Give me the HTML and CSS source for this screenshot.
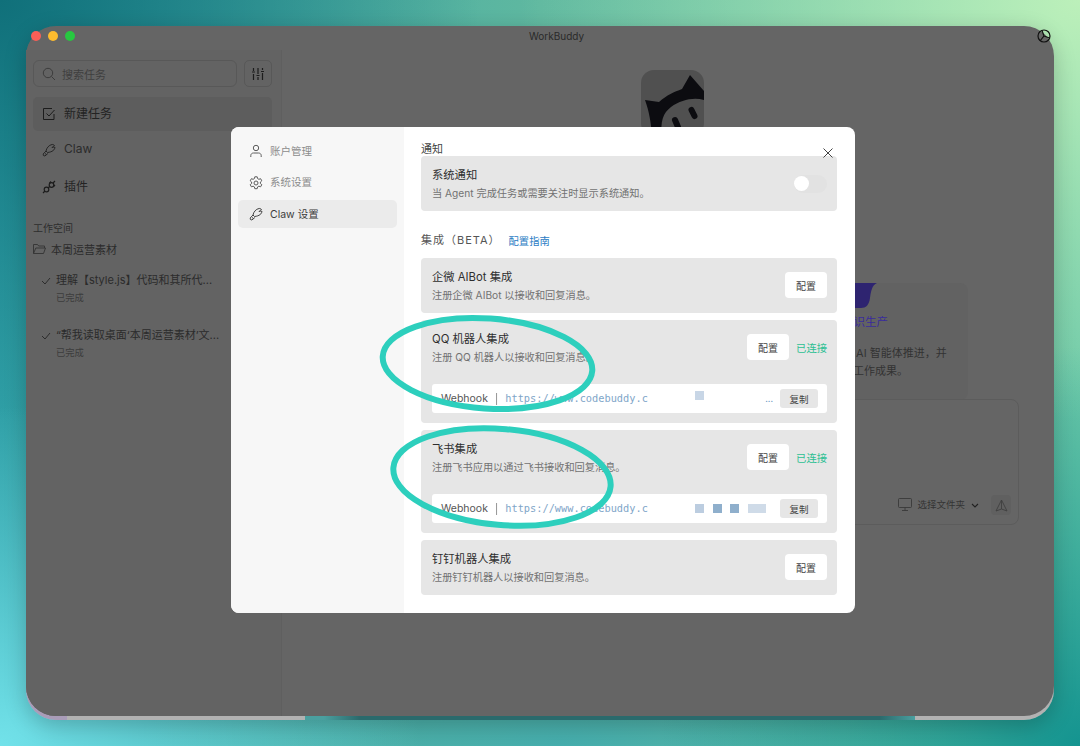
FILE: index.html
```html
<!DOCTYPE html>
<html lang="zh-CN">
<head>
<meta charset="utf-8"/>
<title>WorkBuddy</title>
<link rel="stylesheet" href="styles.css">
</head>
<body>

<div class="window">
  <div class="shell">
    <div class="titlebar">
      <div class="lights"><i class="red"></i><i class="yellow"></i><i class="green"></i></div>
      <div class="app-title">WorkBuddy</div>
      <svg class="account-icon" width="14" height="14" viewBox="0 0 14 14" fill="none" stroke="#111" stroke-width="1.2"><circle cx="7" cy="7" r="6"/><path d="M3 12 7 7l5.5 2M7 7 5 1.5"/></svg>
    </div>

    <div class="app-body">
      <aside class="sidebar">
        <div class="search-row">
          <div class="search">
            <svg width="14" height="14" viewBox="0 0 14 14" fill="none" stroke="#3c3c3c" stroke-width="1"><circle cx="6" cy="6" r="4.7"/><path d="m9.5 9.5 3.5 3.5"/></svg>
            <span>搜索任务</span>
          </div>
          <div class="filter-btn">
            <svg width="14" height="14" viewBox="0 0 14 14" fill="none" stroke="#1c1c1c" stroke-width="1.2"><path d="M2.5 1v3M2.5 7v6M7 1v6M7 10v3M11.500 1v2M11.500 6v7M1 5h3M5.500 8.500h3M10 4.500h3"/></svg>
          </div>
        </div>
        <div class="nav-item active">
          <svg width="14" height="14" viewBox="0 0 14 14" fill="none" stroke="#1c1c1c" stroke-width="1"><path d="M12 7v5.500H1.500v-11H10"/><path d="m4.500 6.500 2.500 2.500 5.500-6"/></svg>
          <span>新建任务</span>
        </div>
        <div class="nav-item claw">
          <svg width="14" height="14" viewBox="0 0 14 14" fill="none" stroke="#262626" stroke-width="1"><path d="M5.500 9.500 4 8c.5-3 3-6 6-6.500 1-.2 2 .3 2.500 1-1 .5-2 1.300-2.500 2 1-.3 2-.4 3-.2-.3 2.500-2.500 4.700-7.500 5.200z"/><path d="m4 8-2.800 3 .2 1.500 1.500.5 3-2.500M3 10.500l1.500 1"/></svg>
          <span>Claw</span>
        </div>
        <div class="nav-item plugin">
          <svg width="14" height="14" viewBox="0 0 14 14" fill="none" stroke="#1c1c1c" stroke-width="1.2"><circle cx="4.500" cy="9.500" r="2.300"/><circle cx="9.500" cy="5" r="2.300"/><path d="M1 13l2-2M11 3l2-2M9 1.500 7.500 3.200M13 5l-1.500 1.500M6 8l1.500-1.300"/></svg>
          <span>插件</span>
        </div>
        <div class="section-label">工作空间</div>
        <div class="folder">
          <svg width="13" height="12" viewBox="0 0 13 12" fill="none" stroke="#333" stroke-width=".9"><path d="M.5 10.500v-9h4l1.200 1.500h5.800v2M.5 10.500h10l2-5.500H2.800z"/></svg>
          <span>本周运营素材</span>
        </div>
        <div class="task">
          <svg width="10" height="8" viewBox="0 0 10 8" fill="none" stroke="#2c2c2c" stroke-width="1"><path d="m1 4 3 3 5-6"/></svg>
          <div><div class="task-title">理解【style.js】代码和其所代...</div><div class="task-status">已完成</div></div>
        </div>
        <div class="task">
          <svg width="10" height="8" viewBox="0 0 10 8" fill="none" stroke="#2c2c2c" stroke-width="1"><path d="m1 4 3 3 5-6"/></svg>
          <div><div class="task-title">“帮我读取桌面‘本周运营素材’文...</div><div class="task-status">已完成</div></div>
        </div>
      </aside>

      <main class="main">
        <svg class="logo" width="63" height="66" viewBox="0 0 63 66">
          <rect width="63" height="66" rx="13" fill="#505050"/>
          <path d="M4 30 18 32C26 25 33 22 41 19L49 5 63 21V30C52 27 40 30 30 37 22 43 19 52 21 66H11C10 52 8 41 4 30Z" fill="#0c0c10"/>
          <g stroke="#0c0c10" stroke-width="6" stroke-linecap="round"><path d="m34 50 3 7M50.500 40l3 6"/></g>
        </svg>
        <section class="feature">
          <svg class="feature-mark" width="42" height="25" viewBox="0 0 42 25"><path d="M0 0H42C37 2 36 8 35 15 34 22 31 25 26 25H0Z" fill="#2e2470"/></svg>
          <div class="feature-title">知识生产</div>
          <p class="feature-text">由 AI 智能体推进，并<br>的工作成果。</p>
        </section>
        <section class="composer">
          <svg width="14" height="13" viewBox="0 0 14 13" fill="none" stroke="#3a3a3a" stroke-width=".9"><rect x=".5" y=".5" width="13" height="9" rx="1"/><path d="M4 12.500h6M7 9.500v3"/></svg>
          <span class="folder-pick">选择文件夹</span>
          <svg width="8" height="5" viewBox="0 0 8 5" fill="none" stroke="#222" stroke-width="1.100"><path d="m1 1 3 3 3-3"/></svg>
          <div class="send-btn">
            <svg width="13" height="13" viewBox="0 0 13 13" fill="none" stroke="#3f3f3f" stroke-width=".9"><path d="M6.500 1 12 12 6.500 10 1 12zM6.500 1v9"/></svg>
          </div>
        </section>
      </main>
    </div>
  </div>
  <div class="edge-strips">
    <i class="seg-a"></i><i class="seg-b"></i><i class="seg-c"></i><i class="seg-d"></i><i class="seg-e"></i><i class="seg-c seg-f"></i>
  </div>
</div>

<div class="modal">
  <nav class="modal-nav">
    <div class="modal-link">
      <svg width="14" height="14" viewBox="0 0 14 14" fill="none" stroke="#5c5c5c" stroke-width="1"><circle cx="7" cy="4" r="2.700"/><path d="M1.800 13v-1.500c0-1.500 1.200-2.500 2.700-2.500h5c1.500 0 2.700 1 2.700 2.500V13"/></svg>
      <span>账户管理</span>
    </div>
    <div class="modal-link">
      <svg width="14" height="14" viewBox="0 0 14 14" fill="none" stroke="#5c5c5c" stroke-width="1"><circle cx="7" cy="7" r="2"/><path d="M5.800.8h2.400l.4 1.800 1.300.7 1.700-.6 1.200 2.100-1.400 1.200v1.500l1.400 1.200-1.200 2.100-1.700-.6-1.300.7-.4 1.800H5.800l-.4-1.800-1.300-.7-1.700.6L1.200 8.700l1.400-1.200V6L1.200 4.800l1.200-2.100 1.700.6 1.300-.7z"/></svg>
      <span>系统设置</span>
    </div>
    <div class="modal-link current">
      <svg width="14" height="14" viewBox="0 0 14 14" fill="none" stroke="#444" stroke-width="1"><path d="M5.500 9.500 4 8c.5-3 3-6 6-6.500 1-.2 2 .3 2.500 1-1 .5-2 1.300-2.500 2 1-.3 2-.4 3-.2-.3 2.500-2.500 4.700-7.500 5.200z"/><path d="m4 8-2.800 3 .2 1.500 1.500.5 3-2.500M3 10.500l1.500 1"/></svg>
      <span>Claw 设置</span>
    </div>
  </nav>

  <div class="modal-content">
    <svg class="close" width="10" height="10" viewBox="0 0 10 10" fill="none" stroke="#444" stroke-width="1"><path d="m.5.500 9 9M9.500.500l-9 9"/></svg>
    <h3 class="group-title first">通知</h3>
    <div class="card notify">
      <div class="card-head">
        <div>
          <div class="card-title">系统通知</div>
          <div class="card-desc">当 Agent 完成任务或需要关注时显示系统通知。</div>
        </div>
        <div class="toggle"><i></i></div>
      </div>
    </div>

    <div class="group-row">
      <h3 class="group-title">集成（BETA）</h3>
      <a class="guide">配置指南</a>
    </div>

    <div class="card">
      <div class="card-head">
        <div>
          <div class="card-title">企微 AIBot 集成</div>
          <div class="card-desc">注册企微 AIBot 以接收和回复消息。</div>
        </div>
        <button class="config">配置</button>
      </div>
    </div>

    <div class="card">
      <div class="card-head">
        <div>
          <div class="card-title">QQ 机器人集成</div>
          <div class="card-desc">注册 QQ 机器人以接收和回复消息。</div>
        </div>
        <button class="config">配置</button>
        <span class="connected">已连接</span>
      </div>
      <div class="webhook">
        <span class="webhook-label">Webhook</span><span class="sep">|</span>
        <span class="url">https://www.codebuddy.c</span>
        <div class="masks raised"><i class="m-pale"></i></div>
        <span class="dots">...</span>
        <button class="copy">复制</button>
      </div>
    </div>

    <div class="card">
      <div class="card-head">
        <div>
          <div class="card-title">飞书集成</div>
          <div class="card-desc">注册飞书应用以通过飞书接收和回复消息。</div>
        </div>
        <button class="config">配置</button>
        <span class="connected">已连接</span>
      </div>
      <div class="webhook">
        <span class="webhook-label">Webhook</span><span class="sep">|</span>
        <span class="url">https://www.codebuddy.c</span>
        <div class="masks"><i class="m-mid"></i><i class="m-dark"></i><i class="m-dark"></i><i class="m-wide"></i></div>
        <button class="copy">复制</button>
      </div>
    </div>

    <div class="card">
      <div class="card-head">
        <div>
          <div class="card-title">钉钉机器人集成</div>
          <div class="card-desc">注册钉钉机器人以接收和回复消息。</div>
        </div>
        <button class="config">配置</button>
      </div>
    </div>
  </div>
</div>

<svg class="marks" width="1080" height="746" viewBox="0 0 1080 746" fill="none" stroke="#2dcfbd" stroke-width="6">
  <ellipse cx="487.500" cy="363.500" rx="105" ry="45" transform="rotate(4 487.500 363.500)"/>
  <ellipse cx="502" cy="477" rx="109" ry="48" transform="rotate(5 502 477)"/>
</svg>

</body>
</html>
```

FILE: styles.css
```css
* {
  box-sizing: border-box;
}
html, body {
  margin: 0;
  height: 100%;
}
body {
  position: relative;
  width: 1080px;
  height: 746px;
  overflow: hidden;
  font-family: Inter, "Noto Sans CJK SC", sans-serif;
  background:
    radial-gradient(420px 340px at 0 746px, #72e2ea 0, rgba(114,226,234,0) 100%),
    radial-gradient(420px 400px at 1080px 746px, #149490 0, rgba(20,148,144,0) 100%),
    radial-gradient(420px 130px at 560px 746px, #45aeae 0, rgba(69,174,174,0) 100%),
    radial-gradient(560px 420px at 1080px 0, #bcf0ba 0, rgba(188,240,186,0) 100%),
    radial-gradient(480px 420px at 0 0, #10707a 0, rgba(16,112,122,0) 100%),
    linear-gradient(90deg, #2f9fa6 0, #5fb8a0 50%, #6cc8a8 100%);
}
h3, p {
  margin: 0;
  font-weight: normal;
}
button {
  font-family: inherit;
  border: 0;
  padding: 0;
}

/* app window, dimmed behind the dialog */
.window {
  position: absolute;
  z-index: 0;
  left: 26px;
  top: 26px;
  width: 1028px;
  height: 694px;
  display: flex;
  flex-direction: column;
  border-radius: 30px;
  box-shadow: 0 6px 22px rgba(0,0,0,.22);
}
.shell {
  position: relative;
  z-index: 1;
  flex: 1;
  display: flex;
  flex-direction: column;
  min-height: 0;
  background: #656565;
  border-radius: 30px;
}
.edge-strips {
  height: 34px;
  margin-top: -30px;
  display: flex;
  align-items: stretch;
  border-radius: 0 0 30px 30px;
  overflow: hidden;
}
.edge-strips i {
  display: block;
}
.seg-a { width: 15px; background: #a99cb8; }
.seg-b { width: 26px; background: #a99cb8; }
.seg-c { width: 238px; background: #b2b2b2; }
.seg-d { width: 19px; background: #4a9f9f; }
.seg-e { width: 591px; background: linear-gradient(90deg, #4a9f9f, #2a6a6c 6%, #2a6a6c 94%, #4a9f9f); }
.seg-f { width: 139px; }

.titlebar {
  height: 24px;
  flex: none;
  display: grid;
  grid-template-columns: 1fr auto 1fr;
  align-items: center;
  padding: 0 3px 4px 5px;
  color: #2a2a2a;
}
.lights {
  display: flex;
  gap: 7px;
}
.lights i {
  width: 10px;
  height: 10px;
  border-radius: 50%;
}
.red { background: #fb5f57; }
.yellow { background: #febc2e; }
.green { background: #27c840; }
.app-title {
  margin-left: 31px;
  font-size: 10px;
}
.account-icon {
  justify-self: end;
}

.app-body {
  flex: 1;
  display: flex;
  min-height: 0;
}
.sidebar {
  width: 256px;
  flex: none;
  padding: 10px 9px 0 7px;
  border-right: 1px solid #5f5f5f;
  border-bottom-left-radius: 30px;
  background: #636363;
}
.search-row {
  display: flex;
  gap: 7px;
}
.search {
  flex: 1;
  height: 27px;
  display: flex;
  align-items: center;
  gap: 6px;
  padding-left: 8px;
  border: 1px solid #585858;
  border-radius: 6px;
  font-size: 11px;
  color: #3f3f3f;
}
.filter-btn {
  width: 28px;
  height: 27px;
  display: flex;
  align-items: center;
  justify-content: center;
  border: 1px solid #585858;
  border-radius: 5px;
}
.nav-item {
  height: 34px;
  display: flex;
  align-items: center;
  gap: 8px;
  padding-left: 9px;
  font-size: 12px;
  color: #232323;
  border-radius: 5px;
}
.nav-item span {
  margin-bottom: 3px;
}
.nav-item.active {
  margin-top: 10px;
  background: #5d5d5d;
}
.nav-item.claw {
  margin-top: 2px;
  color: #2b2b2b;
}
.nav-item.plugin {
  margin-top: 3px;
}
.section-label {
  margin-top: 17px;
  font-size: 10px;
  line-height: 14px;
  color: #2e2e2e;
}
.folder {
  display: flex;
  align-items: center;
  gap: 5px;
  margin-top: 6px;
  height: 16px;
  font-size: 11px;
  color: #2b2b2b;
}
.task {
  display: flex;
  gap: 5px;
  margin: 14px 0 0 8px;
  height: 41px;
}
.task + .task {
  margin-top: 14px;
}
.task svg {
  margin-top: 6px;
  flex: none;
}
.task-title {
  font-size: 11px;
  line-height: 18px;
  color: #2b2b2b;
  white-space: nowrap;
}
.task-status {
  font-size: 9.300px;
  line-height: 17px;
  color: #3c3c3c;
}

.main {
  flex: 1;
  padding-top: 20px;
  min-width: 0;
}
.logo {
  display: block;
  margin-left: 359px;
}
.feature {
  width: 300px;
  height: 117px;
  margin: 147px 0 0 386px;
  padding-left: 174px;
  background: #626262;
  border-radius: 8px;
}
.feature-mark {
  display: block;
  margin-left: -7px;
}
.feature-title {
  margin-top: 6px;
  font-size: 11.500px;
  line-height: 16px;
  color: #3a2c9c;
}
.feature-text {
  margin-top: 15px;
  font-size: 11px;
  line-height: 17.500px;
  color: #333;
  white-space: nowrap;
}
.composer {
  width: 702px;
  height: 126px;
  margin: -1px 0 0 35px;
  padding: 0 7px 9px 0;
  display: flex;
  align-items: flex-end;
  justify-content: flex-end;
  border: 1px solid #5c5c5c;
  border-radius: 8px;
  font-size: 9.500px;
  color: #343434;
}
.composer > svg {
  margin-bottom: 4px;
}
.folder-pick {
  margin: 0 6px 2px 5px;
  line-height: 16px;
}
.composer > svg:nth-of-type(2) {
  margin-bottom: 7px;
}
.send-btn {
  width: 20px;
  height: 20px;
  margin-left: 12px;
  display: flex;
  align-items: center;
  justify-content: center;
  background: #606060;
  border-radius: 4px;
}

/* settings dialog */
.modal {
  position: absolute;
  z-index: 1;
  left: 231px;
  top: 127px;
  width: 624px;
  height: 486px;
  display: flex;
  background: #fff;
  border-radius: 8px;
  overflow: hidden;
}
.modal-nav {
  width: 173px;
  flex: none;
  padding: 10px 7px;
  display: flex;
  flex-direction: column;
  gap: 3.500px;
  background: #f7f7f7;
}
.modal-link {
  height: 28px;
  display: flex;
  align-items: center;
  gap: 7px;
  padding-left: 11px;
  font-size: 10.500px;
  color: #8c8c8c;
  border-radius: 5px;
}
.modal-link span {
  margin-bottom: 2px;
}
.modal-link.current {
  color: #3c3c3c;
  background: #ebebeb;
}
.modal-content {
  position: relative;
  flex: 1;
  padding: 14px 18px 0 17px;
  min-width: 0;
}
.close {
  position: absolute;
  right: 22px;
  top: 21px;
}
.group-title {
  font-size: 11px;
  line-height: 15px;
  color: #444;
}
.group-title.first {
  height: 15px;
  padding-top: 1px;
}
.group-row {
  display: flex;
  align-items: center;
  gap: 8px;
  height: 15px;
  margin: 22px 0 10px;
}
.group-title:not(.first) {
  letter-spacing: 1px;
  color: #555;
}
.guide {
  margin-bottom: 1px;
  font-size: 10.300px;
  color: #2b7cc4;
}
.card {
  margin-bottom: 7px;
  padding: 11px 10px 0 11px;
  background: #e6e6e6;
  border-radius: 4px;
}
.card:has(.webhook) {
  height: 103px;
}
.card:not(:has(.webhook)) {
  height: 55px;
}
.card-head {
  display: flex;
  align-items: center;
  height: 34px;
}
.card-head > div:first-child {
  flex: 1;
}
.card-title {
  font-size: 11.300px;
  line-height: 16px;
  color: #2e2e2e;
}
.card-desc {
  margin-top: 3px;
  font-size: 10.200px;
  line-height: 15px;
  color: #727272;
}
.config {
  width: 42px;
  height: 26px;
  margin-top: -2px;
  font-size: 10px;
  color: #444;
  background: #fff;
  border-radius: 4px;
}
.connected {
  margin: -2px 0 0 7px;
  font-size: 10.300px;
  color: #2bbf92;
}
.toggle {
  width: 33px;
  height: 18px;
  background: #e2e2e2;
  border-radius: 9px;
}
.toggle i {
  display: block;
  width: 15px;
  height: 15px;
  margin-top: 1px;
  background: #fff;
  border-radius: 50%;
}
.webhook {
  height: 29px;
  margin-top: 19px;
  padding: 0 9px;
  display: flex;
  align-items: center;
  background: #fff;
  border-radius: 3px;
}
.webhook-label {
  font-size: 10.500px;
  color: #555;
}
.sep {
  margin: 0 7px;
  font-size: 10px;
  color: #555;
  opacity: .8;
  will-change: transform;
}
.url {
  width: 143px;
  flex: none;
  margin-bottom: 2px;
  white-space: nowrap;
  font-family: "DejaVu Sans Mono", monospace;
  font-size: 10.300px;
  color: #7fa6c9;
}
.masks {
  flex: 1;
  display: flex;
  gap: 8.500px;
  margin-left: 47px;
  margin-top: -1px;
}
.masks.raised {
  margin-top: -6px;
}
.masks i {
  display: block;
  width: 9px;
  height: 9px;
}
.m-pale { background: #c8d6e6; }
.m-mid { background: #bccde0; }
.m-dark { background: #8fafcc; }
.masks .m-wide { width: 18px; background: #cfdbe8; }
.dots {
  margin: 0 7px 0 0;
  font-size: 9px;
  color: #6f9dc4;
}
.copy {
  width: 38px;
  height: 19px;
  font-size: 9.500px;
  color: #444;
  background: #e6e6e6;
  border-radius: 3px;
}

/* hand-drawn rings over the screenshot */
.marks {
  position: absolute;
  z-index: 2;
  left: 0;
  top: 0;
  pointer-events: none;
}
```
